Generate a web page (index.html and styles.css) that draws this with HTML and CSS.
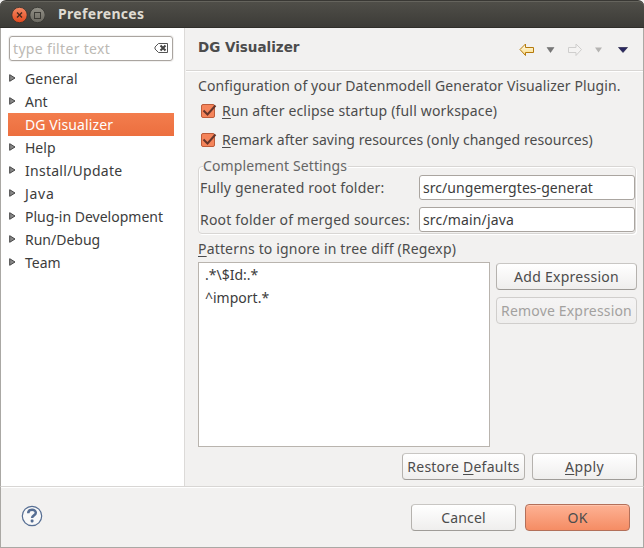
FILE: index.html
```html
<!DOCTYPE html>
<html lang="en">
<head>
<meta charset="utf-8">
<title>Preferences</title>
<link rel="stylesheet" href="styles.css">
</head>
<body>
<div class="window">
  <header class="titlebar">
    <svg class="wm" width="34" height="18" viewBox="0 0 34 18">
      <defs>
        <linearGradient id="cl" x1="0" y1="0" x2="0" y2="1"><stop offset="0" stop-color="#f58a65"/><stop offset="1" stop-color="#e2481d"/></linearGradient>
        <linearGradient id="mx" x1="0" y1="0" x2="0" y2="1"><stop offset="0" stop-color="#929087"/><stop offset="1" stop-color="#6a6860"/></linearGradient>
      </defs>
      <circle cx="8.500" cy="9" r="7.700" fill="url(#cl)" stroke="#30302c" stroke-width=".8"/>
      <path d="M6 6.500l5 5m0-5l-5 5" stroke="#45281c" stroke-width="1.400"/>
      <circle cx="26.500" cy="9" r="7.700" fill="url(#mx)" stroke="#30302c" stroke-width=".8"/>
      <rect x="23.500" y="6.500" width="6" height="6" fill="none" stroke="#3b3a35"/>
    </svg>
    <h1><span class="t-pref">Preferences</span></h1>
  </header>
  <div class="body">
    <aside class="sidebar">
      <div class="filter"><span class="t-filter">type filter text</span>
        <svg width="15" height="11" viewBox="0 0 15 11"><path d="M4.500.5H13.500V9.500H4.500L1 6V4z" fill="#fff" stroke="#555"/><path d="M6.500 2.500l5 5m0-5l-5 5" stroke="#444" stroke-width="2"/></svg>
      </div>
      <ul class="tree">
        <li><svg class="exp" viewBox="0 0 7 8"><path d="M.7.7v6.600L6 4z"/></svg><span class="t-general">General</span></li>
        <li><svg class="exp" viewBox="0 0 7 8"><path d="M.7.7v6.600L6 4z"/></svg><span class="t-ant">Ant</span></li>
        <li class="selected"><span class="t-dg">DG Visualizer</span></li>
        <li><svg class="exp" viewBox="0 0 7 8"><path d="M.7.7v6.600L6 4z"/></svg><span class="t-help">Help</span></li>
        <li><svg class="exp" viewBox="0 0 7 8"><path d="M.7.7v6.600L6 4z"/></svg><span class="t-install">Install/Update</span></li>
        <li><svg class="exp" viewBox="0 0 7 8"><path d="M.7.7v6.600L6 4z"/></svg><span class="t-java">Java</span></li>
        <li><svg class="exp" viewBox="0 0 7 8"><path d="M.7.7v6.600L6 4z"/></svg><span class="t-plugin">Plug-in Development</span></li>
        <li><svg class="exp" viewBox="0 0 7 8"><path d="M.7.7v6.600L6 4z"/></svg><span class="t-run">Run/Debug</span></li>
        <li><svg class="exp" viewBox="0 0 7 8"><path d="M.7.7v6.600L6 4z"/></svg><span class="t-team">Team</span></li>
      </ul>
    </aside>
    <main class="main">
      <div class="head">
        <h2><span class="t-head">DG Visualizer</span></h2>
        <svg class="nav" width="112" height="14" viewBox="0 0 112 14">
          <defs><linearGradient id="gold" x1="0" y1="0" x2="0" y2="1"><stop offset="0" stop-color="#fffdf0"/><stop offset="1" stop-color="#fbd97c"/></linearGradient></defs>
          <path d="M1 6.500L6.500 1v3.500H14.500v5H6.500V12.500z" fill="url(#gold)" stroke="#b57a0c"/>
          <path d="M28 4.500h7L31.500 9.500z" fill="#777" stroke="#666" stroke-width=".5"/>
          <path d="M62.500 6.500L57 1v3.500H49.500v5H57V12.500z" fill="#f4f3f2" stroke="#cfcecd"/>
          <path d="M76 4.500h7L79.500 9.500z" fill="#b5b4b2"/>
          <path d="M99.500 4.500h9L104 9.500z" fill="#292760" stroke="#17163a" stroke-width=".6"/>
        </svg>
      </div>
      <div class="form">
        <p class="intro"><span class="t-conf">Configuration of your Datenmodell Generator Visualizer Plugin.</span></p>
        <div class="check"><svg width="17" height="16" viewBox="0 0 17 16"><rect x="1.500" y="1.500" width="13" height="13" rx="1.500" fill="#f5845a" stroke="#bd5c3a"/><path d="M3.500 7.500l4 4L15.500 2.500" fill="none" stroke="#66352a" stroke-width="2"/></svg><span class="t-c1"><u>R</u>un after eclipse startup (full workspace)</span></div>
        <div class="check second"><svg width="17" height="16" viewBox="0 0 17 16"><rect x="1.500" y="1.500" width="13" height="13" rx="1.500" fill="#f5845a" stroke="#bd5c3a"/><path d="M3.500 7.500l4 4L15.500 2.500" fill="none" stroke="#66352a" stroke-width="2"/></svg><span class="t-c2"><u>R</u>emark after saving resources (only changed resources)</span></div>
        <fieldset class="group">
          <legend><span class="t-comp">Complement Settings</span></legend>
          <div class="row"><label><span class="t-full">Fully generated root folder:</span></label><div class="input"><span class="t-ung">src/ungemergtes-generat</span></div></div>
          <div class="row"><label><span class="t-root">Root folder of merged sources:</span></label><div class="input"><span class="t-main">src/main/java</span></div></div>
        </fieldset>
        <p class="patterns"><span class="t-pat"><u>P</u>atterns to ignore in tree diff (Regexp)</span></p>
        <div class="lists">
          <div class="list"><div><span class="t-id">.*\$Id:.*</span></div><div><span class="t-imp">^import.*</span></div></div>
          <div class="side">
            <div class="btn"><span class="t-add">Add Expression</span></div>
            <div class="btn disabled"><span class="t-rem">Remove Expression</span></div>
          </div>
        </div>
        <div class="actions">
          <div class="btn restore"><span class="t-rest">Restore <u>D</u>efaults</span></div>
          <div class="btn apply"><span class="t-apply"><u>A</u>pply</span></div>
        </div>
      </div>
    </main>
  </div>
  <footer class="footer">
    <svg class="help" width="22" height="22" viewBox="0 0 22 22"><circle cx="11" cy="11" r="9.700" fill="#f8f8f8" stroke="#566e93" stroke-width="1.200"/><path d="M7.200 8.300C7.200 3.700 14.800 3.900 14.800 7.800c0 2.700-3.700 2.500-3.700 5.200" fill="none" stroke="#566e93" stroke-width="2.500"/><rect x="9.700" y="14.600" width="2.800" height="2.800" rx=".8" fill="#566e93"/></svg>
    <div class="btn cancel"><span class="t-cancel">Cancel</span></div>
    <div class="btn ok"><span class="t-ok">OK</span></div>
  </footer>
</div>
</body>
</html>
```
FILE: styles.css
```css
* { box-sizing: border-box; }
html, body { margin: 0; background: #f2f1f0; }
body { font: 14px/22px "Noto Sans", sans-serif; color: #4c4c4c; }
h1, h2, p, ul { margin: 0; padding: 0; font-size: inherit; }
span { white-space: nowrap; }
u { text-underline-offset: 2px; text-decoration-skip-ink: none; text-decoration-thickness: 1px; }
.window { width: 644px; height: 548px; display: flex; flex-direction: column; overflow: hidden; }
.titlebar { height: 28px; flex: none; display: flex; align-items: center; padding-left: 11px; background: linear-gradient(#504f49, #3c3b37); border-top: 1px solid #393834; border-bottom: 1px solid #2f2e2a; box-shadow: inset 0 1px #65645d; border-radius: 6px 6px 0 0; color: #dfdbd2; }
.wm { flex: none; margin-right: 13px; margin-top: 1px; }
h1 { line-height: 22px; font-weight: 700; }
.body { display: flex; height: 458px; flex: none; border: solid #aaa8a4; border-width: 0 1px; }
.sidebar { width: 184px; background: #fff; border-right: 1px solid #dcdad8; padding: 8px 10px 0 7px; }
.filter { height: 25px; border: 1px solid #aaa5a0; border-radius: 3px; display: flex; align-items: center; justify-content: space-between; padding: 0 3px; margin: 0 1px; color: #bcb9b4; box-shadow: 0 0 0 1px #f2f1f0; }
.tree { list-style: none; padding-top: 6px; color: #3c3c3c; }
.tree li { height: 23px; line-height: 23px; display: flex; padding-left: 17px; }
.tree .exp { width: 7px; height: 8px; margin: 7px 9px 0 -16px; flex: none; overflow: visible; }
.tree .exp path { fill: #888; stroke: #444; stroke-width: 1; }
.tree .selected { background: linear-gradient(#f37d4d, #ec6f3f); color: #fff; }
.main { flex: 1; min-width: 0; background: #f2f1f0; padding-left: 1px; }
.head { height: 43px; border-bottom: 1px solid #d8d6d4; display: flex; justify-content: space-between; padding: 8px 12px 0 12px; box-shadow: 0 1px #fff; }
.head h2 { font: 700 13.5px/22px "DejaVu Sans", sans-serif; }
.nav { margin-top: 7px; }
.form { padding: 3px 6px 0 12px; }
.intro { height: 24px; line-height: 24px; }
.check { display: flex; align-items: center; height: 26px; padding-left: 2px; gap: 5px; }
.second { margin-top: 3px; }
.group { position: relative; margin: 13px 1px 0 0; height: 68px; padding: 8px 0 0 1px; border: 1px solid #d8d6d4; border-radius: 4px; box-shadow: inset 1px 1px #fff, 1px 1px #fff; min-width: 0; }
.group legend { position: absolute; top: -12px; left: 4px; padding: 0 1px 0 0; background: #f2f1f0; color: #666; line-height: 22px; }
.row { display: flex; height: 25px; margin-bottom: 7px; line-height: 26px; }
.row label { width: 219px; flex: none; }
.input { width: 216px; height: 25px; background: #fff; border: 1px solid #aaa5a0; border-radius: 3px; padding: 0 3px; line-height: 24px; color: #3c3c3c; }
.patterns { height: 24px; line-height: 24px; margin-top: 3px; }
.lists { display: flex; gap: 6px; margin-top: 1px; }
.list { width: 292px; height: 185px; background: #fff; border: 1px solid #b9b4ae; padding: 0 6px; line-height: 23px; color: #3c3c3c; }
.side { padding-top: 1px; display: grid; gap: 7px; align-content: start; }
.btn { width: 141px; height: 27px; flex: none; display: flex; align-items: center; justify-content: center; line-height: 24px; border: 1px solid #b5b2ae; border-top-color: #c8c6c3; border-bottom-color: #9f9c98; border-radius: 4px; background: linear-gradient(#fff, #efeeed); }
.disabled { color: #a3a19f; border-color: #d0cecc; background: linear-gradient(#f5f4f4, #efeeed); }
.actions { display: flex; justify-content: flex-end; gap: 7px; margin-top: 6px; }
.actions .restore { width: 123px; }
.apply, .cancel, .ok { width: 105px; }
.footer { flex: 1; display: flex; padding: 17px 13px 0 20px; border: 1px solid #aaa8a4; border-top-color: #d8d6d4; box-shadow: inset 0 1px #fff; }
.help { margin: 1px auto 0 0; }
.cancel { margin-right: 9px; }
.ok { background: linear-gradient(#fdb294, #f58c64); border-color: #b3705a; box-shadow: inset 0 1px #ffc4ab; }

/* Tracking per label */
.t-pref, .t-install, .t-add, .t-ok { letter-spacing: .27px; }
.t-pref { letter-spacing: .32px; }
.t-filter { letter-spacing: .33px; }
.t-general, .t-main, .t-cancel { letter-spacing: .15px; }
.t-dg, .t-conf, .t-comp { letter-spacing: .1px; }
.t-java { letter-spacing: .7px; }
.t-c1, .t-full, .t-pat, .t-rem { letter-spacing: .17px; }
.t-c2, .t-ung { letter-spacing: .05px; }
.t-root { letter-spacing: .2px; }
.t-rest { letter-spacing: .23px; }
.t-apply { letter-spacing: .4px; }
```
